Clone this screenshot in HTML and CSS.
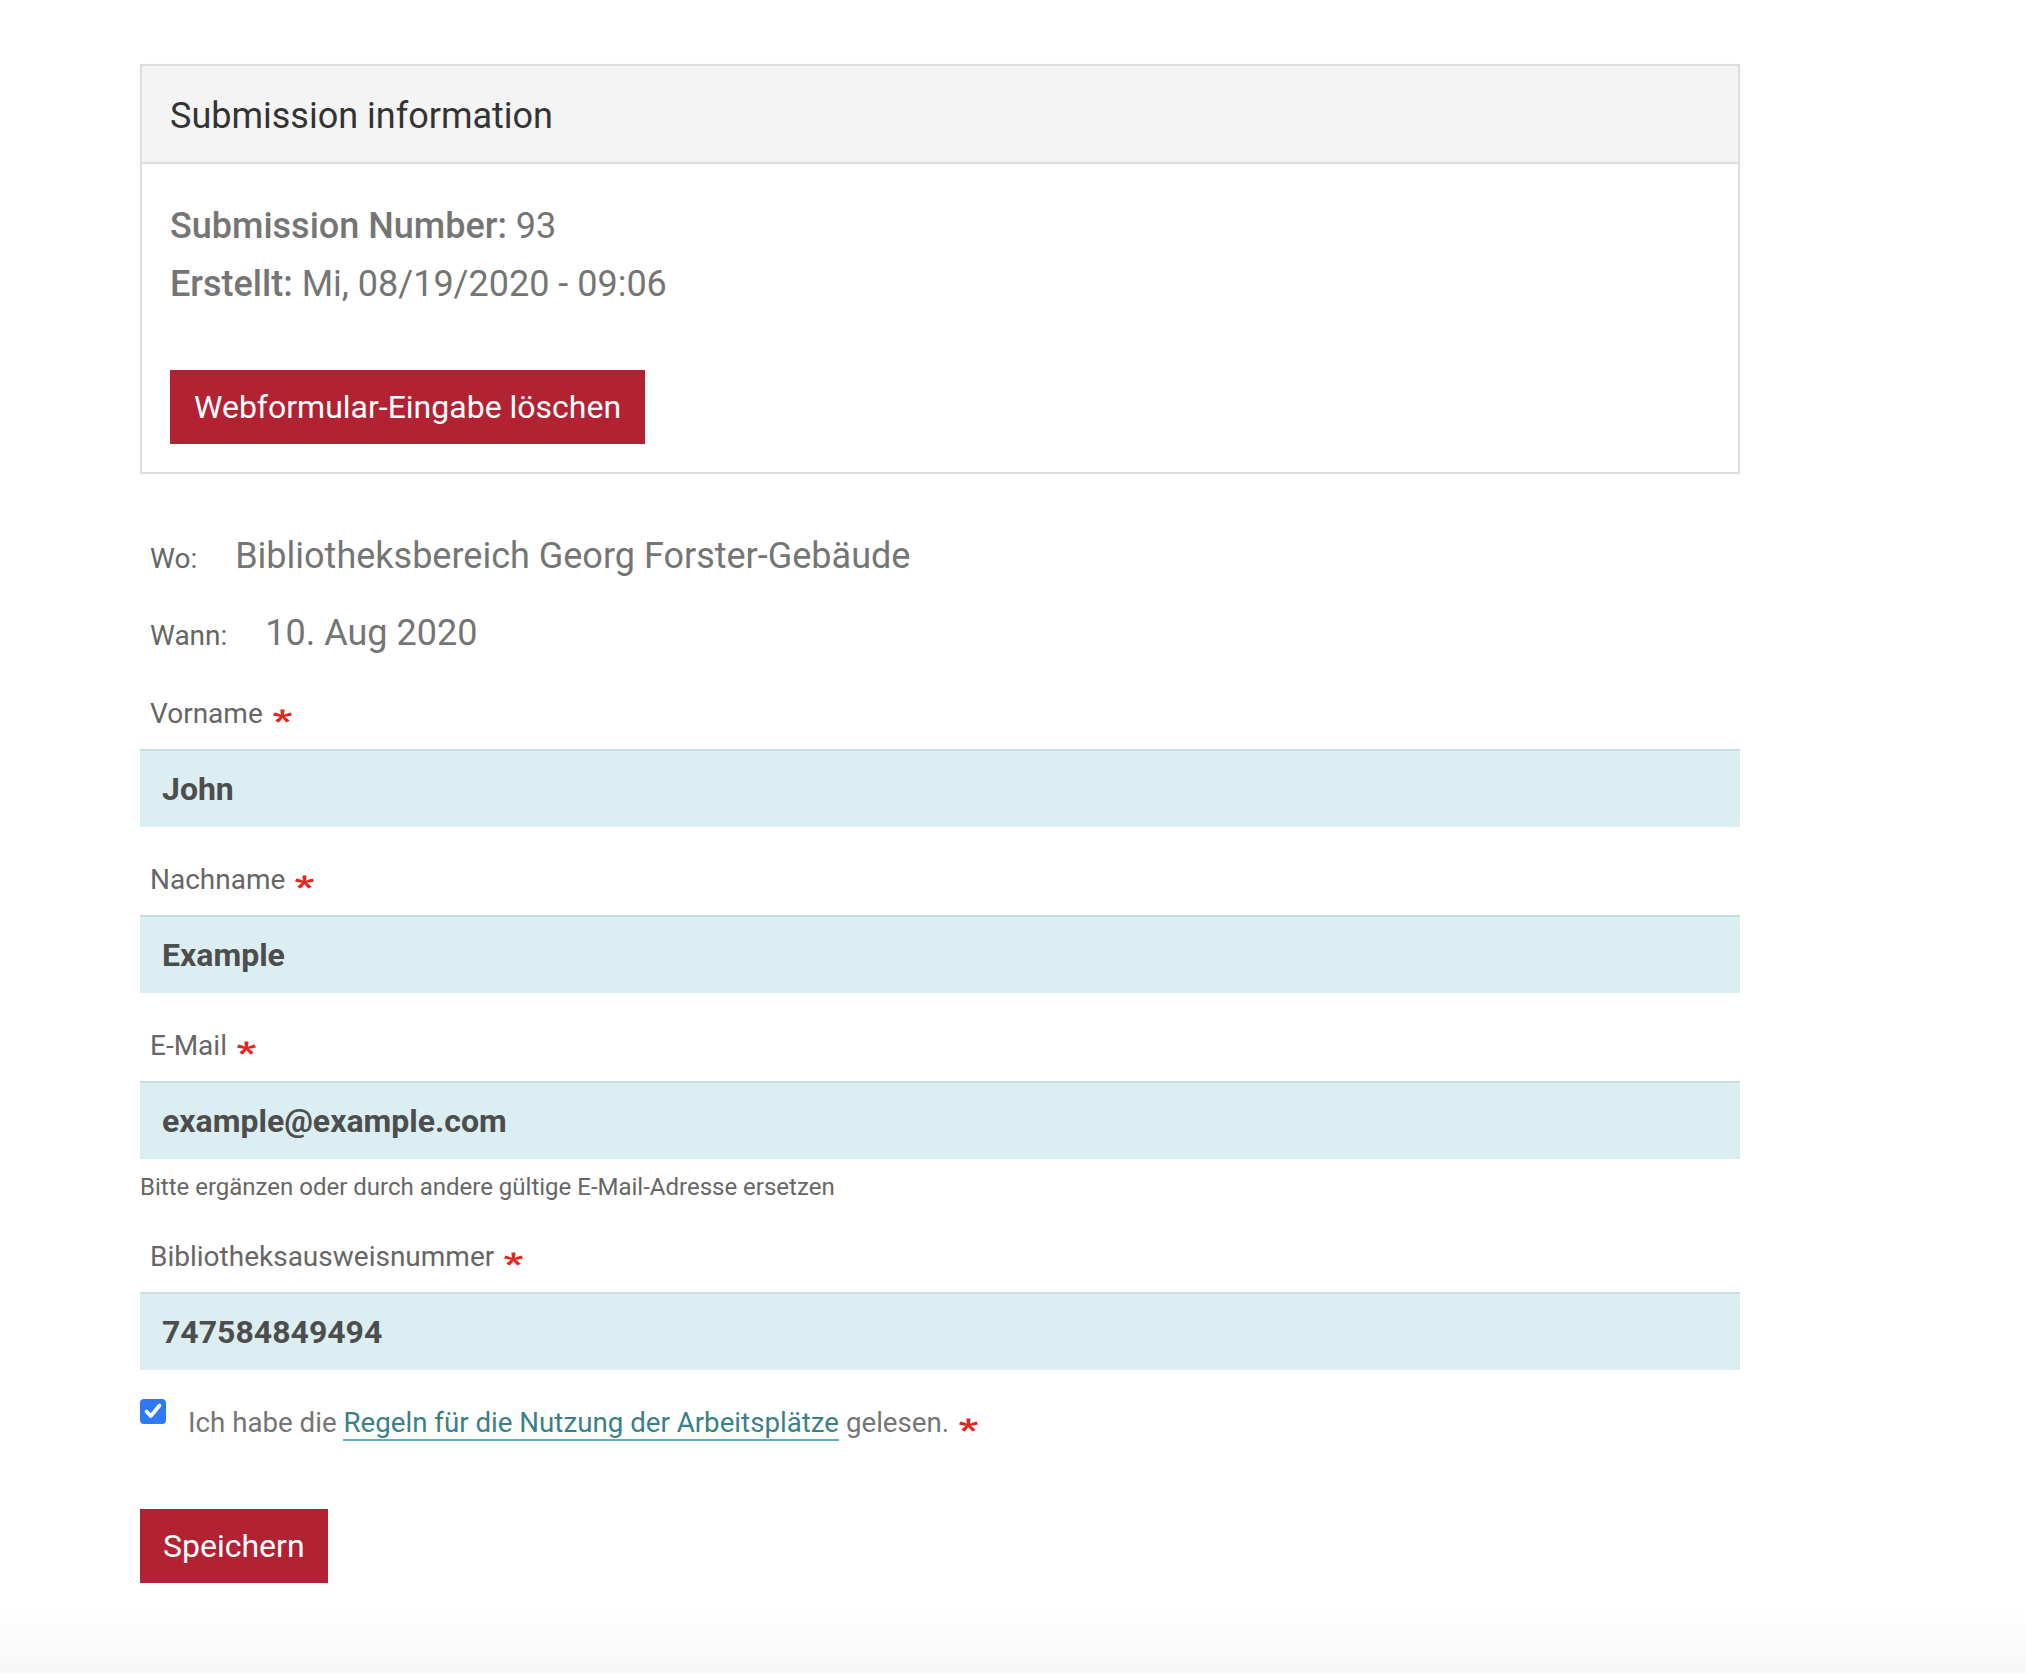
FILE: index.html
```html
<!DOCTYPE html>
<html lang="de">
<head>
    <meta charset="UTF-8">
    <meta name="viewport" content="width=device-width, initial-scale=1.0">
    <title>Webformular-Eingabe</title>
    <link rel="stylesheet" href="styles.css">
</head>
<body>
    <div class="page">
        <div class="submission-box">
            <div class="box-header">Submission information</div>
            <div class="box-body">
                <div class="meta"><span class="meta-label">Submission Number:</span> 93</div>
                <div class="meta"><span class="meta-label">Erstellt:</span> Mi, 08/19/2020 - 09:06</div>
                <button class="btn btn-delete" type="button">Webformular-Eingabe löschen</button>
            </div>
        </div>

        <form class="webform">
            <div class="info-row info-where">
                <span class="info-label">Wo:</span>
                <span class="info-value">Bibliotheksbereich Georg Forster-Gebäude</span>
            </div>
            <div class="info-row info-when">
                <span class="info-label">Wann:</span>
                <span class="info-value">10. Aug 2020</span>
            </div>

            <div class="field field-first">
                <label class="field-label">Vorname <svg class="required" viewBox="0 0 16 16" preserveAspectRatio="none"><path d="M0,7.562l1.114-3.438c2.565,0.906,4.43,1.688,5.59,2.35C6.398,3.553,6.237,1.544,6.22,0.447h3.511c-0.05,1.597-0.234,3.6-0.558,6.003c1.664-0.838,3.566-1.613,5.714-2.325L16,7.562c-2.05,0.678-4.06,1.131-6.028,1.356c0.984,0.856,2.372,2.381,4.166,4.575l-2.906,2.059c-0.935-1.274-2.041-3.009-3.316-5.206c-1.194,2.275-2.244,4.013-3.147,5.206l-2.856-2.059c1.872-2.307,3.211-3.832,4.017-4.575C3.849,8.516,1.872,8.062,0,7.562z"/></svg></label>
                <input class="field-input" type="text" value="John">
            </div>

            <div class="field">
                <label class="field-label">Nachname <svg class="required" viewBox="0 0 16 16" preserveAspectRatio="none"><path d="M0,7.562l1.114-3.438c2.565,0.906,4.43,1.688,5.59,2.35C6.398,3.553,6.237,1.544,6.22,0.447h3.511c-0.05,1.597-0.234,3.6-0.558,6.003c1.664-0.838,3.566-1.613,5.714-2.325L16,7.562c-2.05,0.678-4.06,1.131-6.028,1.356c0.984,0.856,2.372,2.381,4.166,4.575l-2.906,2.059c-0.935-1.274-2.041-3.009-3.316-5.206c-1.194,2.275-2.244,4.013-3.147,5.206l-2.856-2.059c1.872-2.307,3.211-3.832,4.017-4.575C3.849,8.516,1.872,8.062,0,7.562z"/></svg></label>
                <input class="field-input" type="text" value="Example">
            </div>

            <div class="field">
                <label class="field-label">E-Mail <svg class="required" viewBox="0 0 16 16" preserveAspectRatio="none"><path d="M0,7.562l1.114-3.438c2.565,0.906,4.43,1.688,5.59,2.35C6.398,3.553,6.237,1.544,6.22,0.447h3.511c-0.05,1.597-0.234,3.6-0.558,6.003c1.664-0.838,3.566-1.613,5.714-2.325L16,7.562c-2.05,0.678-4.06,1.131-6.028,1.356c0.984,0.856,2.372,2.381,4.166,4.575l-2.906,2.059c-0.935-1.274-2.041-3.009-3.316-5.206c-1.194,2.275-2.244,4.013-3.147,5.206l-2.856-2.059c1.872-2.307,3.211-3.832,4.017-4.575C3.849,8.516,1.872,8.062,0,7.562z"/></svg></label>
                <input class="field-input" type="email" value="example@example.com">
                <div class="field-description">Bitte ergänzen oder durch andere gültige E-Mail-Adresse ersetzen</div>
            </div>

            <div class="field">
                <label class="field-label">Bibliotheksausweisnummer <svg class="required" viewBox="0 0 16 16" preserveAspectRatio="none"><path d="M0,7.562l1.114-3.438c2.565,0.906,4.43,1.688,5.59,2.35C6.398,3.553,6.237,1.544,6.22,0.447h3.511c-0.05,1.597-0.234,3.6-0.558,6.003c1.664-0.838,3.566-1.613,5.714-2.325L16,7.562c-2.05,0.678-4.06,1.131-6.028,1.356c0.984,0.856,2.372,2.381,4.166,4.575l-2.906,2.059c-0.935-1.274-2.041-3.009-3.316-5.206c-1.194,2.275-2.244,4.013-3.147,5.206l-2.856-2.059c1.872-2.307,3.211-3.832,4.017-4.575C3.849,8.516,1.872,8.062,0,7.562z"/></svg></label>
                <input class="field-input" type="text" value="747584849494">
            </div>

            <div class="checkbox-row">
                <span class="checkbox">
                    <svg viewBox="0 0 26 25"><path d="M6.5 12.5 L10.8 17 L19.5 6.5" fill="none" stroke="#fff" stroke-width="3.6" stroke-linecap="round" stroke-linejoin="round"/></svg>
                </span>
                <span class="checkbox-label">Ich habe die <a href="#" class="rules-link">Regeln für die Nutzung der Arbeitsplätze</a> gelesen. <svg class="required" viewBox="0 0 16 16" preserveAspectRatio="none"><path d="M0,7.562l1.114-3.438c2.565,0.906,4.43,1.688,5.59,2.35C6.398,3.553,6.237,1.544,6.22,0.447h3.511c-0.05,1.597-0.234,3.6-0.558,6.003c1.664-0.838,3.566-1.613,5.714-2.325L16,7.562c-2.05,0.678-4.06,1.131-6.028,1.356c0.984,0.856,2.372,2.381,4.166,4.575l-2.906,2.059c-0.935-1.274-2.041-3.009-3.316-5.206c-1.194,2.275-2.244,4.013-3.147,5.206l-2.856-2.059c1.872-2.307,3.211-3.832,4.017-4.575C3.849,8.516,1.872,8.062,0,7.562z"/></svg></span>
            </div>

            <div class="form-actions">
                <button class="btn btn-save" type="button">Speichern</button>
            </div>
        </form>
    </div>
    <div class="footer"></div>
</body>
</html>
```

FILE: styles.css
```css
body {
    margin: 0;
    font-family: Roboto, "Liberation Sans", sans-serif;
    background-color: white;
    color: #666;
}

.page {
    width: 1600px;
    padding: 64px 0 0 140px;
}

.submission-box {
    border: 2px solid #dddddd;
    box-shadow: 0 0 3px rgba(0,0,0,0.04);
}

.box-header {
    background-color: #f4f4f4;
    border-bottom: 2px solid #dddddd;
    padding: 30px 28px 26px;
    font-size: 36px;
    line-height: 40px;
    color: #333;
}

.box-body {
    padding: 33px 28px 28px;
    background-color: white;
}

.meta {
    font-size: 36px;
    line-height: 58px;
    color: #757575;
}

.meta-label {
    font-weight: 500;
}

.btn {
    display: inline-block;
    border: none;
    background-color: #b22232;
    color: white;
    font-family: Roboto, "Liberation Sans", sans-serif;
    font-size: 32px;
    line-height: 46px;
    padding: 14px 24px;
    cursor: pointer;
}

.btn-delete {
    margin-top: 57px;
}

.btn-save {
    padding: 14px 23px;
}

/* Wo / Wann */
.info-row {
    display: flex;
    align-items: baseline;
    padding-left: 10px;
    line-height: 50px;
}

.info-where {
    margin-top: 57px;
}

.info-when {
    margin-top: 27px;
}

.info-label {
    font-size: 28px;
    line-height: 40px;
    color: #666;
    margin-right: 38px;
}

.info-value {
    font-size: 36px;
    color: #757575;
}

/* fields */
.field {
    margin-top: 33px;
}

.field-first {
    margin-top: 36px;
}

.field-label {
    display: block;
    padding-left: 10px;
    font-size: 28px;
    line-height: 40px;
    color: #666;
    margin-bottom: 15px;
}

.required {
    width: 19px;
    height: 14px;
    fill: #e3261f;
    margin-left: 3px;
    vertical-align: baseline;
}

.field-input {
    display: block;
    box-sizing: border-box;
    width: 100%;
    height: 78px;
    margin: 0;
    padding: 0 22px;
    border: none;
    border-top: 2px solid #c6dfe3;
    background-color: #dbeff2;
    font-family: Roboto, "Liberation Sans", sans-serif;
    font-size: 32px;
    font-weight: bold;
    color: #4d4d4d;
    outline: none;
}

.field-description {
    margin-top: 11px;
    font-size: 24px;
    line-height: 34px;
    color: #666;
}

/* checkbox */
.checkbox-row {
    display: flex;
    align-items: flex-start;
    margin-top: 29px;
}

.checkbox {
    width: 26px;
    height: 25px;
    border-radius: 4px;
    background-color: #3079f4;
    flex-shrink: 0;
    margin-right: 22px;
}

.checkbox svg {
    display: block;
    width: 26px;
    height: 25px;
}

.checkbox-label {
    margin-top: 4px;
    font-size: 27.7px;
    line-height: 40px;
    color: #757575;
}

.rules-link {
    color: #3b7f87;
    text-decoration: none;
    border-bottom: 2px solid #5cb0b9;
}

.checkbox-label .required {
    margin-left: 3px;
}

.form-actions {
    margin-top: 66px;
}

.footer {
    margin-top: 24px;
    height: 66px;
    background: linear-gradient(#ffffff, #f7f7f7);
}
```
